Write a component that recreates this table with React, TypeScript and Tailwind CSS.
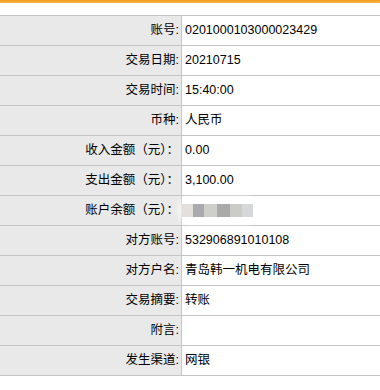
const rows: { label: string; value: string; masked?: boolean }[] = [
  { label: '账号:', value: '0201000103000023429' },
  { label: '交易日期:', value: '20210715' },
  { label: '交易时间:', value: '15:40:00' },
  { label: '币种:', value: '人民币' },
  { label: '收入金额（元）：', value: '0.00' },
  { label: '支出金额（元）：', value: '3,100.00' },
  { label: '账户余额（元）：', value: '', masked: true },
  { label: '对方账号:', value: '532906891010108' },
  { label: '对方户名:', value: '青岛韩一机电有限公司' },
  { label: '交易摘要:', value: '转账' },
  { label: '附言:', value: '' },
  { label: '发生渠道:', value: '网银' },
];

// 余额打码的色块
const maskBlocks = [
  { c: '#e2dfdd', w: 11 },
  { c: '#aaaaae', w: 11 },
  { c: '#cfcfca', w: 13 },
  { c: '#aaaaaa', w: 13 },
  { c: '#cbccc6', w: 12 },
  { c: '#d6d7d8', w: 11 },
];

function MaskedValue() {
  return (
    <div className="relative h-full flex items-center ml-[-3px]">
      <div className="absolute left-[-4px] top-[1px] w-[80px] h-[27px] rounded-full bg-white/70 blur-[3px]" />
      <div className="relative flex">
        {maskBlocks.map((b, i) => (
          <div key={i} className="h-[13px]" style={{ backgroundColor: b.c, width: b.w }} />
        ))}
      </div>
    </div>
  );
}

export default function App() {
  return (
    <div
      className="w-[380px] h-[390px] overflow-hidden bg-white text-black text-[12.5px]"
      style={{ fontFamily: '"Liberation Sans", "Noto Sans CJK SC", sans-serif' }}
    >
      <div className="h-[3px] bg-gradient-to-b from-[#f39a12] to-[#fbb84e]" />
      <div className="mt-[12px] border-t border-[#c4c4c4]">
        {rows.map((r) => (
          <div key={r.label} className="flex h-[30px] border-b border-[#c4c4c4]">
            <div className="w-[182px] shrink-0 bg-[#e8e9e8] border-r border-[#c4c4c4] flex items-center justify-end pr-[2px] whitespace-nowrap">
              {r.label}
            </div>
            <div className="flex-1 flex items-center pl-[3px] whitespace-nowrap">
              {r.masked ? <MaskedValue /> : r.value}
            </div>
          </div>
        ))}
      </div>
    </div>
  );
}
